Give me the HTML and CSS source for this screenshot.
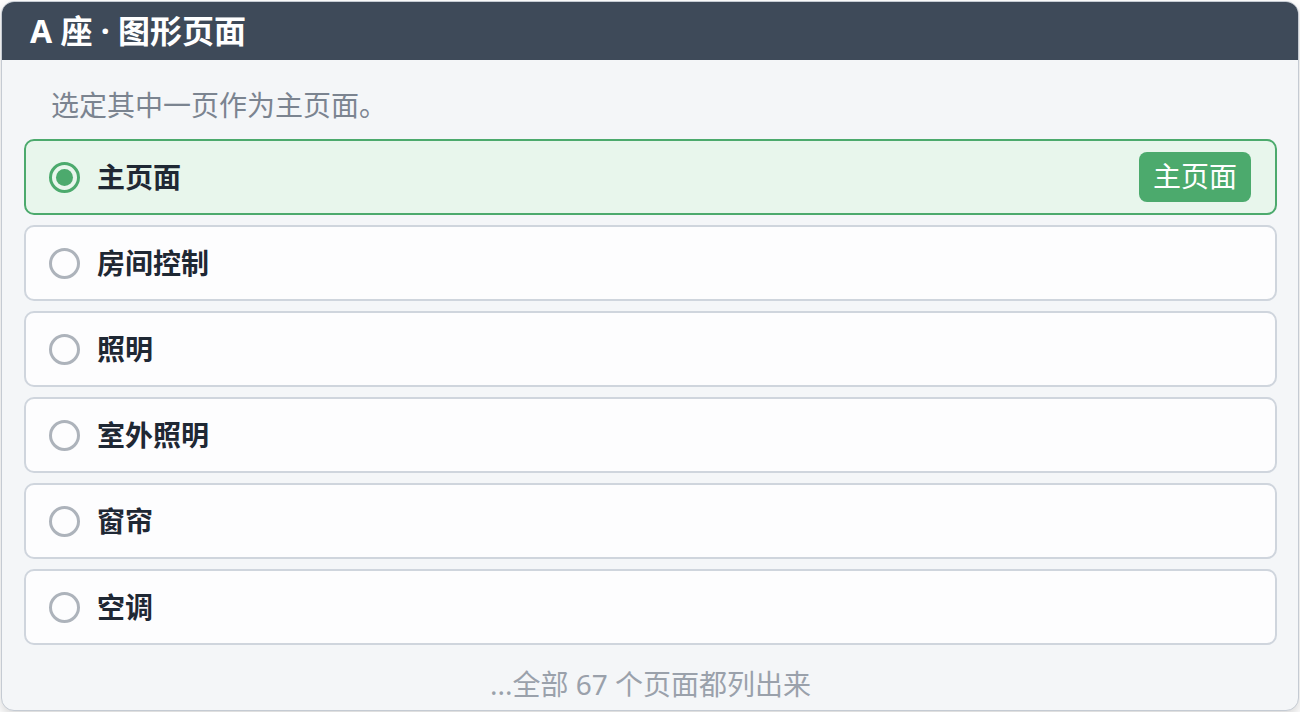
FILE: index.html
```html
<!DOCTYPE html>
<html lang="zh-CN">
<head>
<meta charset="utf-8">
<title>A 座 · 图形页面</title>
<link rel="stylesheet" href="styles.css">
</head>
<body>

<!-- start:dialog -->
<div class="dialog">
	<div class="dialog-head">A 座 · 图形页面</div>

	<div class="dialog-body">
		<p class="hint">选定其中一页作为主页面。</p>

		<ul class="page-list">
			<li class="page-item selected">
				<span class="radio"></span>
				<span class="label">主页面</span>
				<span class="badge">主页面</span>
			</li>
			<li class="page-item">
				<span class="radio"></span>
				<span class="label">房间控制</span>
			</li>
			<li class="page-item">
				<span class="radio"></span>
				<span class="label">照明</span>
			</li>
			<li class="page-item">
				<span class="radio"></span>
				<span class="label">室外照明</span>
			</li>
			<li class="page-item">
				<span class="radio"></span>
				<span class="label">窗帘</span>
			</li>
			<li class="page-item">
				<span class="radio"></span>
				<span class="label">空调</span>
			</li>
		</ul>

		<p class="more">...全部 67 个页面都列出来</p>
	</div>
</div>
<!-- end:dialog -->

</body>
</html>
```

FILE: styles.css
```css
body, div, ul, li, p {margin: 0; padding: 0;}
ul {list-style: none;}

/* ---------- structure ---------- */
body {background: #fff; font-family: "Noto Sans", "Noto Sans CJK SC", sans-serif; color: #1f2834;}
.dialog {margin: 1px; width: 1296px; height: 708px; border: 1px solid #c5cbd3; border-radius: 13px; background: #f4f6f8; overflow: hidden; box-shadow: 0 5px 12px rgba(0, 0, 0, .16); display: flex; flex-direction: column;}
.dialog-head {height: 58px; background: #3e4a59; color: #fff; font-size: 32px; font-weight: bold; line-height: 58px; padding-left: 28px;}
.dialog-body {flex: 1; padding: 0 21px 0 22px; display: flex; flex-direction: column;}

/* ---------- text ---------- */
.hint {font-size: 28px; color: #7b8490; padding: 27px 0 0 27px; line-height: 36px; height: 36px;}
.more {font-size: 28px; color: #9aa1ab; text-align: center; line-height: 36px; margin-top: 21px;}

/* ---------- list ---------- */
.page-list {display: flex; flex-direction: column; gap: 10px; margin-top: 16px;}
.page-item {height: 72px; border: 2px solid #cfd5dd; border-radius: 10px; background: #fdfdfe; display: flex; align-items: center; padding: 0 24px 0 23px;}
.page-item.selected {border-color: #4caa6d; background: #e8f6ec;}
.radio {width: 25px; height: 25px; border: 3px solid #adb3bb; border-radius: 50%; flex: none; display: flex; align-items: center; justify-content: center;}
.selected .radio {border-color: #4caa6d;}
.selected .radio:after {content: ''; width: 17px; height: 17px; border-radius: 50%; background: #4caa6d;}
.label {font-size: 28px; font-weight: bold; margin-left: 17px; padding-bottom: 3px; flex: 1;}
.badge {background: #4caa6d; color: #fff; font-size: 28px; height: 50px; line-height: 48px; padding: 0 14px; border-radius: 8px;}
```
